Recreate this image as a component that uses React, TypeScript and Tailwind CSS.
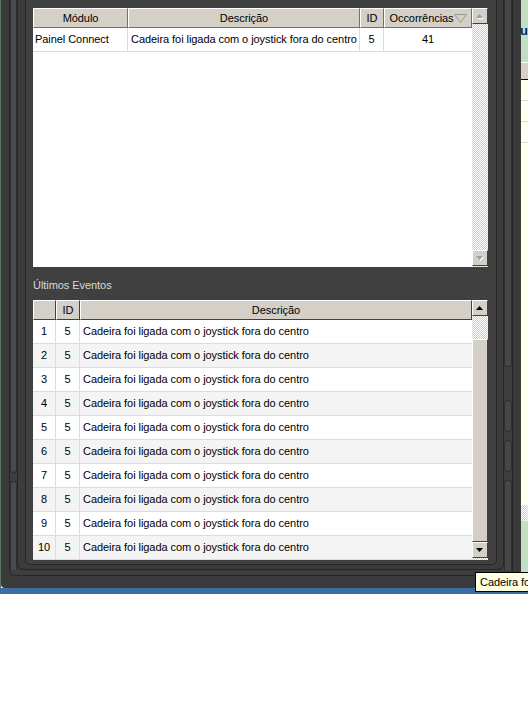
import type { ReactNode } from "react";

const checker =
  "bg-[image:repeating-conic-gradient(#d4d0c8_0%_25%,#ffffff_0%_50%)] bg-[length:2px_2px]";

function HeadCell({ w, children, className = "" }: { w: string; children?: ReactNode; className?: string }) {
  return (
    <div
      className={`${w} flex h-full shrink-0 items-center justify-center border-t border-l border-r border-b border-t-white border-l-white border-r-[#6f6f6f] border-b-[#6f6f6f] ${className}`}
    >
      {children}
    </div>
  );
}

function Arrow({ up, disabled }: { up?: boolean; disabled?: boolean }) {
  const d = up ? "M3.5 0 L7 4 L0 4 Z" : "M0 0 L7 0 L3.5 4 Z";
  return (
    <div className="flex h-[16px] w-[16px] items-center justify-center border border-t-white border-l-white border-r-[#404040] border-b-[#404040] bg-[#d4d0c8]">
      <svg width="8" height="5" viewBox="0 0 8 5">
        {disabled && <path d={d} fill="#ffffff" transform="translate(1 1)" />}
        <path d={d} fill={disabled ? "#a0a0a0" : "#000000"} />
      </svg>
    </div>
  );
}

function TopTable() {
  return (
    <div className="flex h-[259px]">
      <div className="flex w-[439px] flex-col bg-white">
        <div className="flex h-[20px] bg-[#d4d0c8]">
          <HeadCell w="w-[95px]">Módulo</HeadCell>
          <HeadCell w="w-[232px]">Descrição</HeadCell>
          <HeadCell w="w-[24px]">ID</HeadCell>
          <HeadCell w="w-[88px]" className="justify-between pl-[4px] pr-[4px]">
            <span>Occorrências</span>
            <svg width="13" height="9" viewBox="0 0 13 9">
              <path d="M0.5 0.5 L12.5 0.5 L6.5 8.5 Z" fill="none" stroke="#9a9a9a" />
            </svg>
          </HeadCell>
        </div>
        <div className="flex h-[24px] whitespace-nowrap border-b border-[#dcdcdc]">
          <div className="flex w-[95px] items-center border-r border-[#dcdcdc] pl-[2px]">Painel Connect</div>
          <div className="flex w-[232px] items-center overflow-hidden border-r border-[#dcdcdc] pl-[3px]">
            Cadeira foi ligada com o joystick fora do centro
          </div>
          <div className="flex w-[24px] items-center justify-center border-r border-[#dcdcdc]">5</div>
          <div className="flex w-[88px] items-center justify-center">41</div>
        </div>
      </div>
      <div className="flex w-[16px] flex-col">
        <Arrow up disabled />
        <div className={`flex-1 ${checker}`} />
        <Arrow disabled />
        <div className={`h-[1px] ${checker}`} />
      </div>
    </div>
  );
}

function BottomTable() {
  const rows = Array.from({ length: 10 }, (_, i) => i + 1);
  return (
    <div className="flex h-[260px]">
      <div className="flex w-[439px] flex-col bg-white">
        <div className="flex h-[20px] bg-[#d4d0c8]">
          <HeadCell w="w-[23px]" className="border-r-[#404040] border-b-[#404040]" />
          <HeadCell w="w-[24px]" className="border-r-[#404040] border-b-[#404040]">ID</HeadCell>
          <HeadCell w="w-[392px]" className="border-r-[#404040] border-b-[#404040]">Descrição</HeadCell>
        </div>
        {rows.map((n) => (
          <div
            key={n}
            className={`flex h-[24px] whitespace-nowrap border-b border-[#dcdcdc] ${n % 2 === 0 ? "bg-[#f4f4f4]" : "bg-white"}`}
          >
            <div className="flex w-[23px] items-center justify-center border-r border-[#dcdcdc]">{n}</div>
            <div className="flex w-[24px] items-center justify-center border-r border-[#dcdcdc]">5</div>
            <div className="flex w-[392px] items-center pl-[3px]">
              Cadeira foi ligada com o joystick fora do centro
            </div>
          </div>
        ))}
      </div>
      <div className="flex w-[16px] flex-col">
        <Arrow up />
        <div className={`h-[23px] ${checker}`} />
        <div className="flex-1 border border-t-white border-l-white border-r-[#404040] border-b-[#404040] bg-[#d4d0c8]" />
        <Arrow />
        <div className={`h-[2px] ${checker}`} />
      </div>
    </div>
  );
}

function RightWindow() {
  return (
    <div className="flex w-[7px] flex-col overflow-hidden">
      <div className="flex h-[62px] items-center bg-[#c3dfc3] text-[13px] font-bold text-[#0a246a]">
        <span className="-ml-[1px]">ui</span>
      </div>
      <div className="h-[1px] bg-white" />
      <div className="h-[16px] bg-[#d4d0c8]" />
      <div className="h-[1px] bg-black" />
      <div className="flex flex-1 flex-col bg-[#fffff0]">
        <div className="h-[21px] border-b border-[#d8d8d8]" />
        <div className="h-[21px] border-b border-[#d8d8d8]" />
        <div className="h-[21px] border-b border-[#d8d8d8]" />
      </div>
      <div className={`h-[15px] ${checker}`} />
      <div className="h-[1px] bg-[#e8f2e8]" />
      <div className="h-[67px] bg-[#c3dfc3]" />
    </div>
  );
}

export default function App() {
  return (
    <div className="h-[724px] w-[528px] bg-white font-['Liberation_Sans',Arial,sans-serif] text-[11px] tracking-[-0.06px] text-black">
      <div className="relative flex h-[594px] flex-col">
        <div className="flex h-[588px]">
          <div className="w-[1px] bg-[#5b725d]" />
          {/* outer frame */}
          <div className="flex w-[520px] flex-col rounded-b-[4px] bg-[#3a3a3a] pl-[8px] pr-[8px] pb-[12px]">
            <div className="flex h-[576px] rounded-b-[6px] border-x border-b border-[#262626] bg-[#3e3e3e] pb-[5px]">
              <div className="flex w-[7px] flex-col gap-[8px]">
                <div className="h-[473px] rounded-b-[3px] border-x border-b border-[#2f2f2f] bg-[#4a4a4a]" />
                <div className="flex-1 rounded-t-[3px] border-x border-t border-[#2f2f2f] bg-[#4a4a4a]" />
              </div>
              {/* frame 2 */}
              <div className="flex w-[487px] flex-col rounded-b-[6px] border-x border-b border-[#262626] bg-[#3c3c3c] pl-[7px] pr-[6px] pb-[4px]">
                {/* panel */}
                <div className="flex h-[565px] flex-col rounded-b-[5px] border-x border-b border-[#262626] bg-[#404040] pt-[8px] pl-[7px] pr-[8px] pb-[4px]">
                  <TopTable />
                  <div className="flex h-[33px] items-center pt-[3px] text-[#d8d8d8]">Últimos Eventos</div>
                  <BottomTable />
                </div>
              </div>
              <div className="flex w-[8px] flex-col">
                <div className="h-[367px] rounded-b-[3px] border-x border-b border-[#2f2f2f] bg-[#474747]" />
                <div className="mt-[33px] h-[32px] rounded-[3px] border border-[#2f2f2f] bg-[#474747]" />
                <div className="mt-[8px] h-[32px] rounded-[3px] border border-[#2f2f2f] bg-[#474747]" />
                <div className="mt-[8px] flex-1 rounded-t-[3px] border-x border-t border-[#2f2f2f] bg-[#474747]" />
              </div>
            </div>
          </div>
          <RightWindow />
        </div>
        <div className="h-[6px] bg-[#3a6ea5]" />
        <div className="absolute left-[475px] top-[572px] flex h-[20px] w-[60px] items-center overflow-hidden whitespace-nowrap border border-black bg-[#ffffe1] pl-[4px]">
          Cadeira foi ligada
        </div>
      </div>
    </div>
  );
}
